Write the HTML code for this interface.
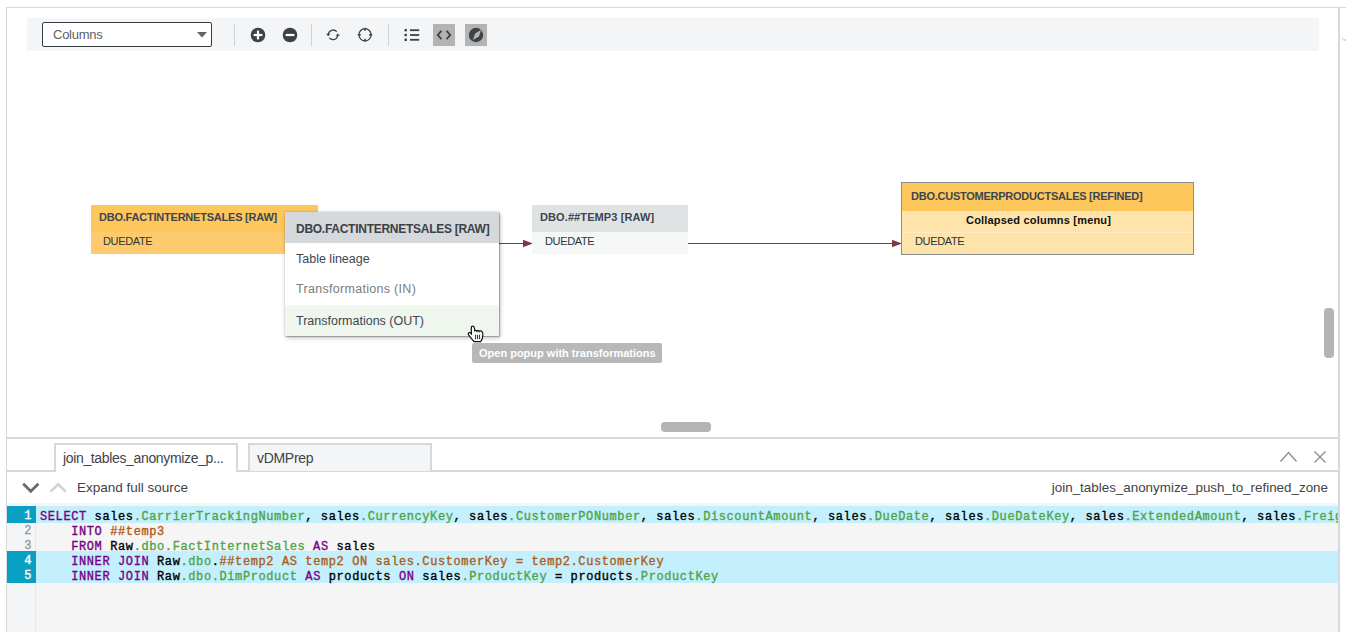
<!DOCTYPE html>
<html><head><meta charset="utf-8">
<style>
*{box-sizing:border-box;margin:0;padding:0}
html,body{width:1346px;height:632px;overflow:hidden;background:#fff;font-family:"Liberation Sans",sans-serif;color:#3d4550}
.abs{position:absolute}
.hl{position:absolute;background:#d5d8dc}
.tb{position:absolute;left:27px;top:18px;width:1292px;height:33px;background:#f4f5f7}
.sel{position:absolute;left:42px;top:22px;width:170px;height:25px;border:1.5px solid #353a40;border-radius:2px;background:#fff}
.sel span{position:absolute;left:10px;top:4px;font-size:13px;color:#5a5f66;letter-spacing:-0.25px}
.sep{position:absolute;top:24px;width:1px;height:22px;background:#d0d3d6}
.btn{position:absolute;top:24px;width:22px;height:22px;background:#b3b3b3}
.node{position:absolute;font-size:11px;white-space:nowrap}
.node .h{position:absolute;left:0;right:0;font-weight:bold}
.node .r{position:absolute;left:0;right:0}
.t{position:absolute;white-space:nowrap}
.code{font-family:"Liberation Mono",monospace;font-size:12px;letter-spacing:0.6px;-webkit-text-stroke:0.35px}
.code div{white-space:pre;height:15px}
.kw{color:#770088}
.pr{color:#4fa447}
.cm{color:#b05c18}
</style></head><body>

<!-- outer panel borders -->
<div class="hl" style="left:6px;top:7px;width:1340px;height:1px"></div>
<div class="hl" style="left:6px;top:7px;width:1px;height:625px"></div>
<div class="hl" style="left:1338px;top:7px;width:2px;height:625px"></div>
<div class="abs" style="left:1342px;top:37px;width:6px;height:4px;border-bottom:2px solid #d8d8d8;border-left:1px solid #e4e4e4;border-radius:0 0 0 3px"></div>

<!-- toolbar -->
<div class="tb"></div>
<div class="sel"><span>Columns</span>
<svg class="abs" style="left:154px;top:9px" width="10" height="6" viewBox="0 0 10 6"><path d="M0 0H10L5 5.5Z" fill="#646464"/></svg>
</div>
<div class="sep" style="left:234px"></div>
<div class="sep" style="left:311px"></div>
<div class="sep" style="left:388px"></div>

<!-- plus -->
<svg class="abs" style="left:250px;top:27px" width="16" height="16" viewBox="0 0 16 16">
<circle cx="8" cy="8" r="7.3" fill="#3d4247"/>
<rect x="3.6" y="6.9" width="8.8" height="2.2" fill="#fff"/><rect x="6.9" y="3.6" width="2.2" height="8.8" fill="#fff"/>
</svg>
<!-- minus -->
<svg class="abs" style="left:282px;top:27px" width="16" height="16" viewBox="0 0 16 16">
<circle cx="8" cy="8" r="7.3" fill="#3d4247"/>
<rect x="3.6" y="6.9" width="8.8" height="2.2" fill="#fff"/>
</svg>
<!-- refresh -->
<svg class="abs" style="left:322px;top:24px" width="22" height="22" viewBox="0 0 22 22" fill="none" stroke="#3d4247" stroke-width="1.3">
<path d="M14.7 7.7A4.8 4.8 0 0 0 6.3 10.4"/><path d="M7.3 13.9A4.8 4.8 0 0 0 15.7 11.2"/>
<path d="M4.1 9.8L8.3 9.8L6.2 12.2Z" fill="#3d4247" stroke="none"/>
<path d="M13.7 11.8L17.9 11.8L15.8 9.4Z" fill="#3d4247" stroke="none"/>
</svg>
<!-- crosshair -->
<svg class="abs" style="left:354px;top:24px" width="22" height="22" viewBox="0 0 22 22" fill="none" stroke="#3d4247" stroke-width="1.3">
<circle cx="11" cy="10.8" r="6.1"/>
<path d="M11 3.8V6.8M11 14.8V17.8M3.8 10.8H6.8M15.2 10.8H18.2" stroke-width="1.5"/>
</svg>
<!-- list -->
<svg class="abs" style="left:403px;top:27px" width="18" height="16" viewBox="0 0 18 16" fill="#3d4247">
<rect x="1.5" y="2" width="2.4" height="2.4"/><rect x="1.5" y="6.8" width="2.4" height="2.4"/><rect x="1.5" y="11.6" width="2.4" height="2.4"/>
<rect x="7" y="2.3" width="9.2" height="1.8"/><rect x="7" y="7.1" width="9.2" height="1.8"/><rect x="7" y="11.9" width="9.2" height="1.8"/>
</svg>
<!-- code btn -->
<div class="btn" style="left:433px"></div>
<svg class="abs" style="left:433px;top:24px" width="22" height="22" viewBox="0 0 22 22" fill="none" stroke="#3d4247" stroke-width="1.9">
<path d="M8.4 6.8L4.8 11L8.4 15.2M13.6 6.8L17.2 11L13.6 15.2"/>
</svg>
<!-- compass btn -->
<div class="btn" style="left:465px"></div>
<svg class="abs" style="left:465px;top:24px" width="22" height="22" viewBox="0 0 22 22">
<circle cx="11" cy="11" r="7.2" fill="#3d4247"/>
<path d="M16.1 5.8L14 12.4L7.9 16.1L10.1 9.5Z" fill="#b3b3b3"/>
<path d="M12.2 11.6L7.6 16.2L9.8 10.4Z" fill="#3d4247" opacity="0"/>
</svg>

<!-- connectors -->
<svg class="abs" style="left:0;top:0" width="1346" height="632">
<path d="M318 243.5H524" stroke="#80393f" stroke-width="1.2"/>
<path d="M523 239.8L533 243.5L523 247.2Z" fill="#80393f"/>
<path d="M688 243.5H893" stroke="#80393f" stroke-width="1.2"/>
<path d="M892 239.8L902 243.5L892 247.2Z" fill="#80393f"/>
</svg>
<!-- node 1 -->
<div class="node" style="left:91px;top:205px;width:227px;height:49px">
 <div class="h" style="top:0;height:27px;background:#fdc75c"><span class="t" style="left:8px;top:6px;letter-spacing:-0.22px">DBO.FACTINTERNETSALES [RAW]</span></div>
 <div class="r" style="top:27px;height:22px;background:#fdcb6e"><span class="t" style="left:12px;top:3px;color:#2f3338;letter-spacing:-0.35px">DUEDATE</span></div>
</div>

<!-- node temp3 -->
<div class="node" style="left:532px;top:205px;width:156px;height:49px">
 <div class="h" style="top:0;height:27px;background:#dfe3e4"><span class="t" style="left:8px;top:6px;letter-spacing:0.1px">DBO.##TEMP3 [RAW]</span></div>
 <div class="r" style="top:27px;height:22px;background:#f5f7f7"><span class="t" style="left:13px;top:3px;color:#2f3338;letter-spacing:-0.35px">DUEDATE</span></div>
</div>

<!-- node refined -->
<div class="node" style="left:901px;top:182px;width:293px;height:73px;border:1px solid #8a8d90;background:#fee3ab">
 <div class="h" style="top:0;height:28px;background:#fdc75c"><span class="t" style="left:9px;top:7px;letter-spacing:-0.25px">DBO.CUSTOMERPRODUCTSALES [REFINED]</span></div>
 <div class="r" style="top:28px;height:22px;border-bottom:1px solid #feebc8"><span class="t" style="left:64px;top:3px;font-weight:bold;color:#111;letter-spacing:0.19px">Collapsed columns [menu]</span></div>
 <div class="r" style="top:50px;height:21px"><span class="t" style="left:13px;top:2px;color:#2f3338;letter-spacing:-0.35px">DUEDATE</span></div>
</div>

<!-- popup -->
<div class="abs" style="left:285px;top:212px;width:214px;height:124px;background:#fff;box-shadow:0 0 2px rgba(0,0,0,0.18),1px 1px 1px rgba(0,0,0,0.22),1px 2px 5px rgba(0,0,0,0.22)">
 <div class="abs" style="left:0;top:0;width:214px;height:31px;background:#d5d8dc"></div>
 <span class="t" style="left:11px;top:10px;font-size:12px;font-weight:bold;color:#3c4146;letter-spacing:-0.27px">DBO.FACTINTERNETSALES [RAW]</span>
 <span class="t" style="left:11px;top:40px;font-size:12.5px;color:#3d4550">Table lineage</span>
 <span class="t" style="left:11px;top:70px;font-size:12.5px;color:#7c7c7c;letter-spacing:0.3px">Transformations (IN)</span>
 <div class="abs" style="left:0;top:93px;width:214px;height:31px;background:#eff6ee"></div>
 <span class="t" style="left:11px;top:102px;font-size:12.5px;color:#3d4550">Transformations (OUT)</span>
</div>

<!-- cursor -->
<svg class="abs" style="left:462px;top:320px" width="28" height="25" viewBox="0 0 28 25">
<path d="M10.6 6.2C11.6 6.2 12.2 7 12.4 8L12.8 10.8C13.6 10.2 14.6 10.3 15 10.9C15.8 10.4 16.8 10.5 17.2 11.2C18.2 10.8 19.6 11 20.2 11.8C20.8 12.4 20.9 13.5 20.8 15L20.4 18.2C20.2 19.5 19.3 20.8 18.6 21.6L12 21.6C11.4 20.8 10.5 19.8 9.5 18.6L6.6 14.8C6.1 14.2 6.2 13.2 6.9 12.8C7.6 12.4 8.6 12.9 9.4 13.8L9.3 8C9.3 7 9.8 6.2 10.6 6.2Z" fill="#fff" stroke="#111" stroke-width="1.2"/>
<path d="M13.6 14.8V19.2M15.6 14.8V19.2M17.6 14.8V19.2" stroke="#111" stroke-width="0.9"/>
<path d="M14.9 11V12.4M17.1 11.3V12.6" stroke="#111" stroke-width="0.7"/>
</svg>
<!-- tooltip -->
<div class="abs" style="left:472px;top:343px;width:190px;height:20px;background:#b8b8b8;border-radius:2px"></div>
<span class="t" style="left:479px;top:347px;font-size:11px;font-weight:bold;color:#fff">Open popup with transformations</span>

<!-- scrollbars -->
<div class="abs" style="left:661px;top:422px;width:50px;height:10px;background:#b4b4b4;border-radius:4px"></div>
<div class="abs" style="left:1324px;top:308px;width:10px;height:50px;background:#b4b4b4;border-radius:4px"></div>

<!-- bottom panel -->
<div class="hl" style="left:6px;top:437px;width:1334px;height:2px"></div>
<!-- tabs -->
<div class="hl" style="left:6px;top:470px;width:1334px;height:2px"></div>
<div class="abs" style="left:54px;top:443px;width:184px;height:29px;border:2px solid #d5d8dc;border-bottom:none;background:#fff"></div>
<span class="t" style="left:63px;top:450px;font-size:14px;color:#404347;letter-spacing:-0.35px">join_tables_anonymize_p...</span>
<div class="abs" style="left:248px;top:443px;width:184px;height:28px;border:2px solid #d5d8dc;border-bottom:none;background:#f4f5f7"></div>
<span class="t" style="left:257px;top:450px;font-size:14px;color:#404347;letter-spacing:-0.3px">vDMPrep</span>
<!-- chevron up & close -->
<svg class="abs" style="left:1278px;top:449px" width="52" height="16" viewBox="0 0 52 16" fill="none" stroke="#8e8e8e" stroke-width="1.4">
<path d="M2.5 12.5L10.5 3.5L18.5 12.5"/>
<path d="M36.5 2.5L47.5 13.5M47.5 2.5L36.5 13.5"/>
</svg>

<!-- source toolbar -->
<svg class="abs" style="left:20px;top:480px" width="50" height="16" viewBox="0 0 50 16" fill="none" stroke-width="2.2">
<path d="M3.2 3.8L10.8 11.2L18.4 3.8" stroke="#6a6a6a" stroke-width="2.8"/>
<path d="M30.6 11.6L38.2 4.4L45.8 11.6" stroke="#d2d2d2" stroke-width="2.6"/>
</svg>
<span class="t" style="left:77px;top:480px;font-size:13.5px;color:#404347">Expand full source</span>
<span class="t" style="right:18px;top:480px;font-size:13.4px;color:#404347">join_tables_anonymize_push_to_refined_zone</span>

<!-- code area -->
<div class="abs" style="left:7px;top:503px;width:1331px;height:129px;background:#f5f5f5;overflow:hidden">
 <div class="abs" style="left:0;top:0;width:29px;height:129px;background:#f4f5f7;border-right:1px solid #e8e8ea"></div>
 <div class="abs" style="left:0;top:3px;width:1331px;height:17px;background:#c3f0fc"></div>
 <div class="abs" style="left:0;top:48px;width:1331px;height:32px;background:#c3f0fc"></div>
 <div class="abs" style="left:0;top:3px;width:29px;height:17px;background:#0aa0c4"></div>
 <div class="abs" style="left:0;top:48px;width:29px;height:32px;background:#0aa0c4"></div>
</div>
<!-- code text -->
<div class="abs code" style="left:6px;top:509px;width:29px;line-height:15px;text-align:right;padding-right:3px;color:#999">
<div style="color:#fff">1</div><div>2</div><div>3</div><div style="color:#fff">4</div><div style="color:#fff">5</div>
</div>
<div class="abs code" style="left:40px;top:510px;width:1298px;height:120px;line-height:15px;color:#000;overflow:hidden">
<div><span class="kw">SELECT</span> sales<span class="pr">.CarrierTrackingNumber</span>, sales<span class="pr">.CurrencyKey</span>, sales<span class="pr">.CustomerPONumber</span>, sales<span class="pr">.DiscountAmount</span>, sales<span class="pr">.DueDate</span>, sales<span class="pr">.DueDateKey</span>, sales<span class="pr">.ExtendedAmount</span>, sales<span class="pr">.FreightAmount</span></div>
<div>    <span class="kw">INTO</span> <span class="cm">##temp3</span></div>
<div>    <span class="kw">FROM</span> Raw<span class="pr">.dbo.FactInternetSales</span> <span class="kw">AS</span> sales</div>
<div>    <span class="kw">INNER</span> <span class="kw">JOIN</span> Raw<span class="pr">.dbo</span>.<span class="cm">##temp2 AS temp2 ON sales.CustomerKey = temp2.CustomerKey</span></div>
<div>    <span class="kw">INNER</span> <span class="kw">JOIN</span> Raw<span class="pr">.dbo.DimProduct</span> <span class="kw">AS</span> products <span class="kw">ON</span> sales<span class="pr">.ProductKey</span> = products<span class="pr">.ProductKey</span></div>
</div>
</body></html>
